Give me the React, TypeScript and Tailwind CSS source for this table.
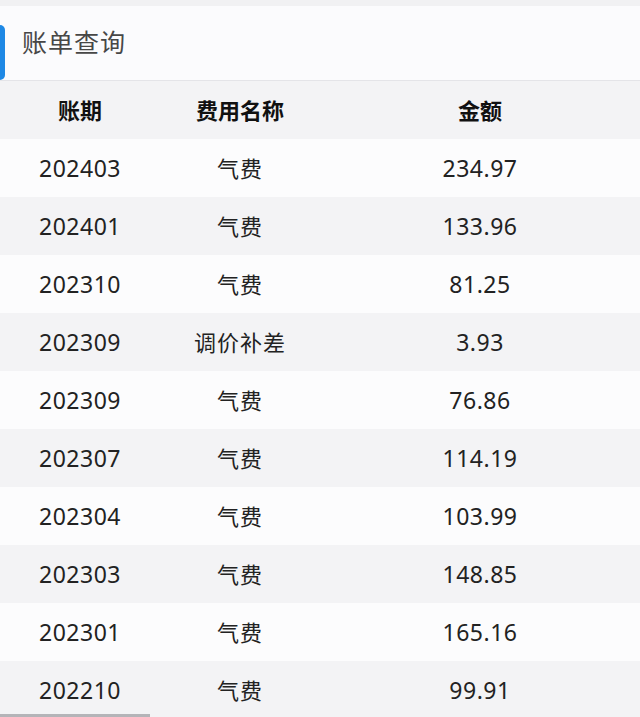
const rows = [
  { period: '202403', name: '气费', amount: '234.97' },
  { period: '202401', name: '气费', amount: '133.96' },
  { period: '202310', name: '气费', amount: '81.25' },
  { period: '202309', name: '调价补差', amount: '3.93' },
  { period: '202309', name: '气费', amount: '76.86' },
  { period: '202307', name: '气费', amount: '114.19' },
  { period: '202304', name: '气费', amount: '103.99' },
  { period: '202303', name: '气费', amount: '148.85' },
  { period: '202301', name: '气费', amount: '165.16' },
  { period: '202210', name: '气费', amount: '99.91' },
];

const App = () => {
  return (
    <div className="relative h-[717px] w-[640px] overflow-hidden bg-[#f1f1f3] pt-[6px] font-['Noto_Sans','Noto_Sans_CJK_SC',sans-serif]">
      <div className="flex h-[75px] items-center border-b border-[#e4e4e8] bg-[#fbfbfd]">
        <div className="mt-[18px] h-[55px] w-[5px] rounded-r-md bg-[#1e88e5]" />
        <h1 className="ml-[17px] text-[25px] tracking-[1px] text-[#474747]">账单查询</h1>
      </div>

      <div className="grid h-[58px] grid-cols-4 items-center bg-[#f3f3f5] text-[22px] font-bold text-[#111]">
        <div className="text-center">账期</div>
        <div className="text-center">费用名称</div>
        <div className="col-span-2 text-center">金额</div>
      </div>

      {rows.map((r, i) => (
        <div
          key={i}
          className={`grid h-[58px] grid-cols-4 items-center text-[22px] text-[#222] ${
            i % 2 === 0 ? 'bg-[#fcfcfd]' : 'bg-[#f3f3f5]'
          }`}
        >
          <div className="text-center text-[23px] tracking-[0.5px]">{r.period}</div>
          <div className="text-center tracking-[1px]">{r.name}</div>
          <div className="col-span-2 text-center text-[23px] tracking-[0.5px]">{r.amount}</div>
        </div>
      ))}

      <div className="absolute bottom-0 left-0 h-[3px] w-[150px] bg-[#b4b4b8]" />
    </div>
  );
};

export default App;
